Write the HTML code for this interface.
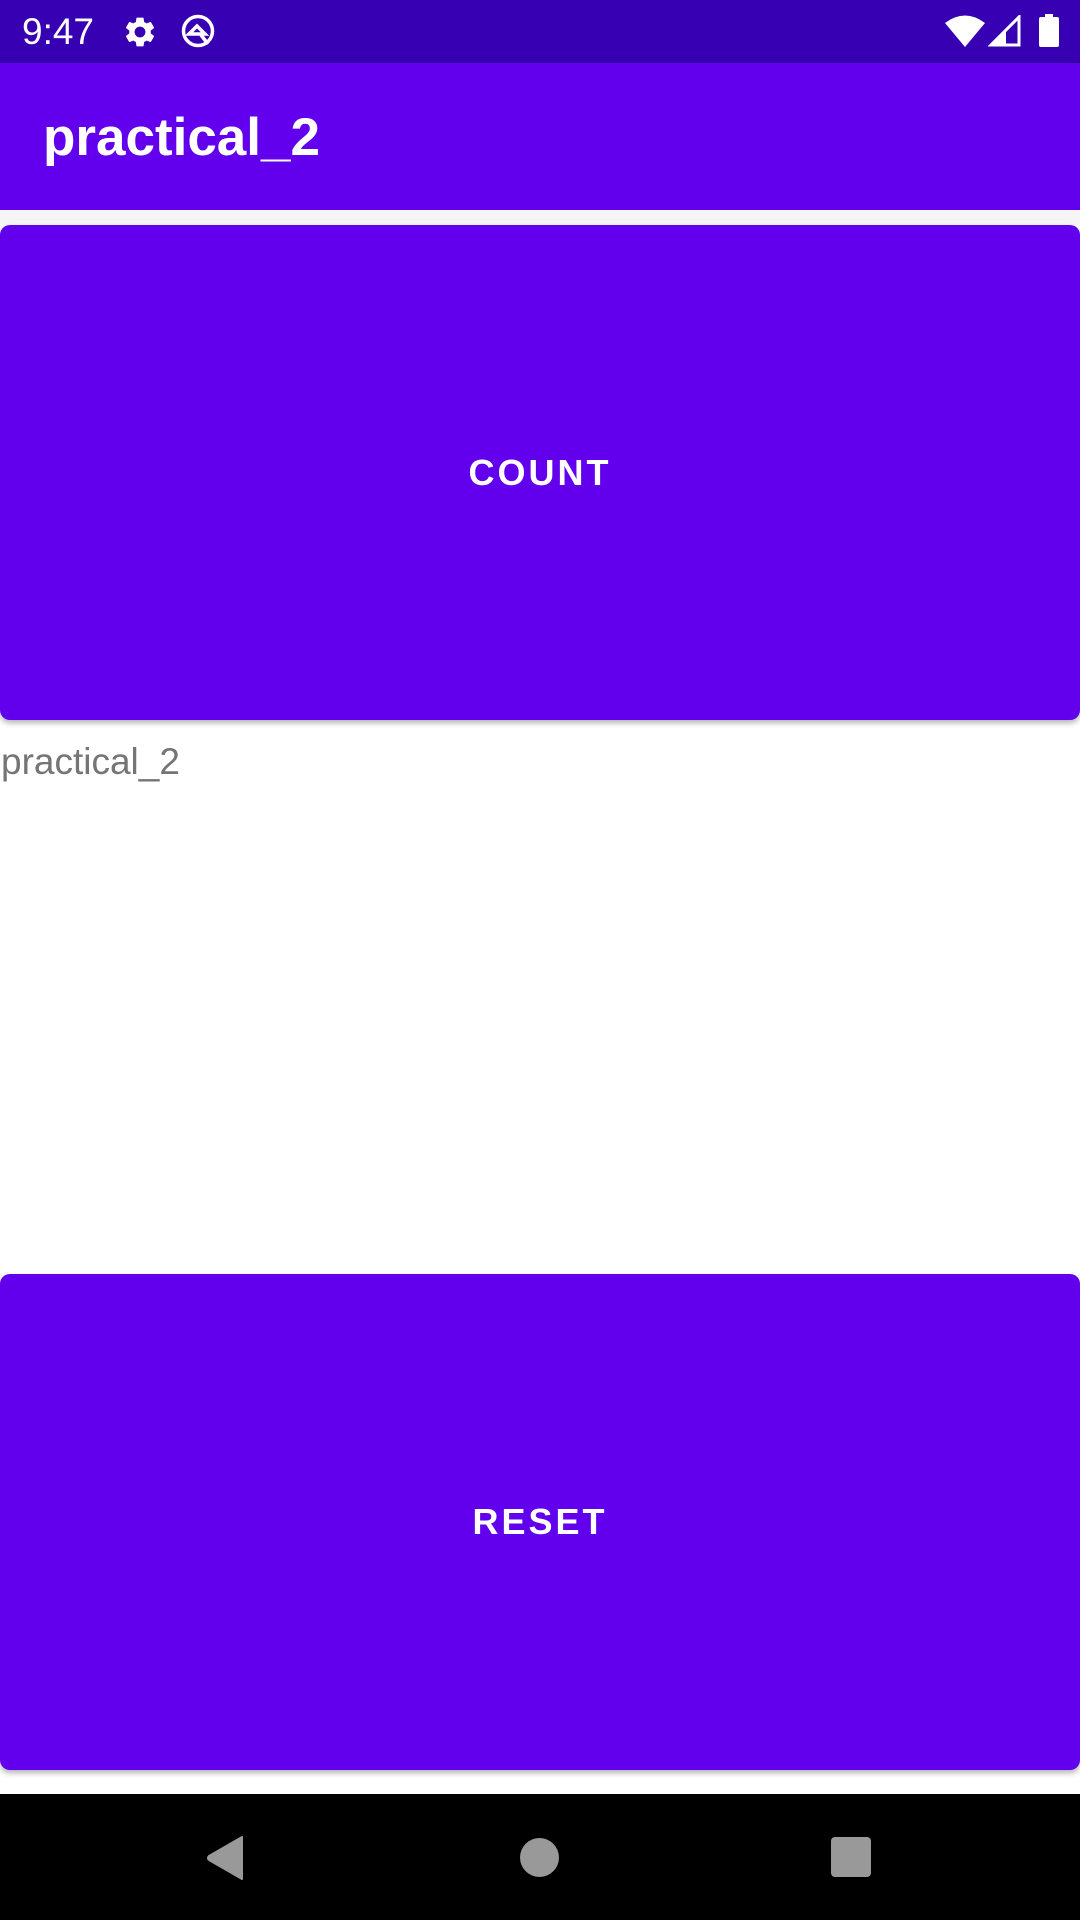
<!DOCTYPE html>
<html><head><meta charset="utf-8"><style>
*{margin:0;padding:0;box-sizing:border-box}
html,body{width:1080px;height:1920px;overflow:hidden;background:#fff;font-family:"Liberation Sans",sans-serif}
.sb{position:absolute;left:0;top:0;width:1080px;height:63px;background:#3700B3}
.time{position:absolute;left:22px;top:11px;color:#fff;font-size:37px}
.ab{position:absolute;left:0;top:63px;width:1080px;height:147px;background:#6200EE;box-shadow:0 3px 8px rgba(0,0,0,.25)}
.title{position:absolute;left:43px;top:44px;color:#fff;font-size:53px;font-weight:bold;letter-spacing:0}
.btn{position:absolute;left:0;width:1080px;background:#6200EE;border-radius:10px;box-shadow:0 3px 6px rgba(0,0,0,.3);color:#fff;font-size:36px;font-weight:bold;letter-spacing:3px;display:flex;align-items:center;justify-content:center}
.txt{position:absolute;left:1px;top:741px;color:#757575;font-size:37px}
.nav{position:absolute;left:0;top:1794px;width:1080px;height:126px;background:#000}
</style></head><body>
<div class="sb">
<div class="time">9:47</div>
<svg style="position:absolute;left:122px;top:14px" width="36" height="36" viewBox="0 0 24 24"><path fill="#fff" d="M19.14 12.94c.04-.3.06-.61.06-.94s-.02-.64-.07-.94l2.03-1.58a.49.49 0 0 0 .12-.61l-1.92-3.32a.49.49 0 0 0-.59-.22l-2.39.96c-.5-.38-1.03-.7-1.62-.94l-.36-2.540a.48.48 0 0 0-.48-.41h-3.84c-.24 0-.43.17-.47.41l-.36 2.54c-.59.24-1.130.57-1.62.94l-2.39-.96a.48.48 0 0 0-.59.22L2.74 8.87c-.12.21-.08.47.12.61l2.03 1.58c-.05.3-.09.63-.09.94s.02.64.07.94l-2.030 1.58a.49.49 0 0 0-.12.61l1.92 3.32c.12.22.37.29.59.22l2.39-.96c.5.38 1.03.7 1.62.94l.36 2.54c.05.24.24.41.48.41h3.84c.24 0 .44-.17.47-.41l.36-2.54c.59-.24 1.13-.56 1.62-.94l2.39.96c.22.08.47 0 .59-.22l1.92-3.32c.12-.22.07-.47-.12-.61l-2.01-1.58zM12 15.6A3.6 3.6 0 1 1 12 8.4a3.6 3.6 0 0 1 0 7.2z"/></svg>
<svg style="position:absolute;left:180px;top:13px" width="36" height="36" viewBox="0 0 36 36"><circle cx="18" cy="18" r="14.5" fill="none" stroke="#fff" stroke-width="3.5"/><path d="M9 21 L17 13 L25 21 Z" fill="none" stroke="#fff" stroke-width="3.5"/><path d="M21 22 L28 31" stroke="#fff" stroke-width="3.5"/></svg>
<svg style="position:absolute;left:945px;top:14px" width="40" height="33" viewBox="0 0 40 33"><path d="M0 9 Q20 -6 40 9 L20 33 Z" fill="#fff"/></svg>
<svg style="position:absolute;left:988px;top:15px" width="33" height="32" viewBox="0 0 33 32"><path d="M31 2 L31 30 L3 30 Z" fill="none" stroke="#fff" stroke-width="3"/><path d="M3 30 L18 15 L18 30 Z" fill="#fff"/></svg>
<svg style="position:absolute;left:1039px;top:14px" width="20" height="33" viewBox="0 0 20 33"><rect x="6" y="0" width="8" height="4" fill="#fff"/><rect x="0" y="3" width="20" height="30" rx="2" fill="#fff"/></svg>
</div>
<div class="ab"><div class="title">practical_2</div></div>
<div style="position:absolute;left:0;top:210px;width:1080px;height:15px;background:#f5f5f5"></div>
<div class="btn" style="top:225px;height:495px">COUNT</div>
<div class="txt">practical_2</div>
<div class="btn" style="top:1274px;height:496px">RESET</div>
<div class="nav">
<svg style="position:absolute;left:206px;top:42px" width="38" height="44" viewBox="0 0 38 44"><path d="M36 1 L36 43 L3 24 Q1 22 3 20 Z" fill="#999" stroke="#999" stroke-linejoin="round" stroke-width="2"/></svg>
<div style="position:absolute;left:520px;top:44px;width:39px;height:39px;border-radius:50%;background:#999"></div>
<div style="position:absolute;left:831px;top:43px;width:40px;height:40px;border-radius:4px;background:#999"></div>
</div>
</body></html>
